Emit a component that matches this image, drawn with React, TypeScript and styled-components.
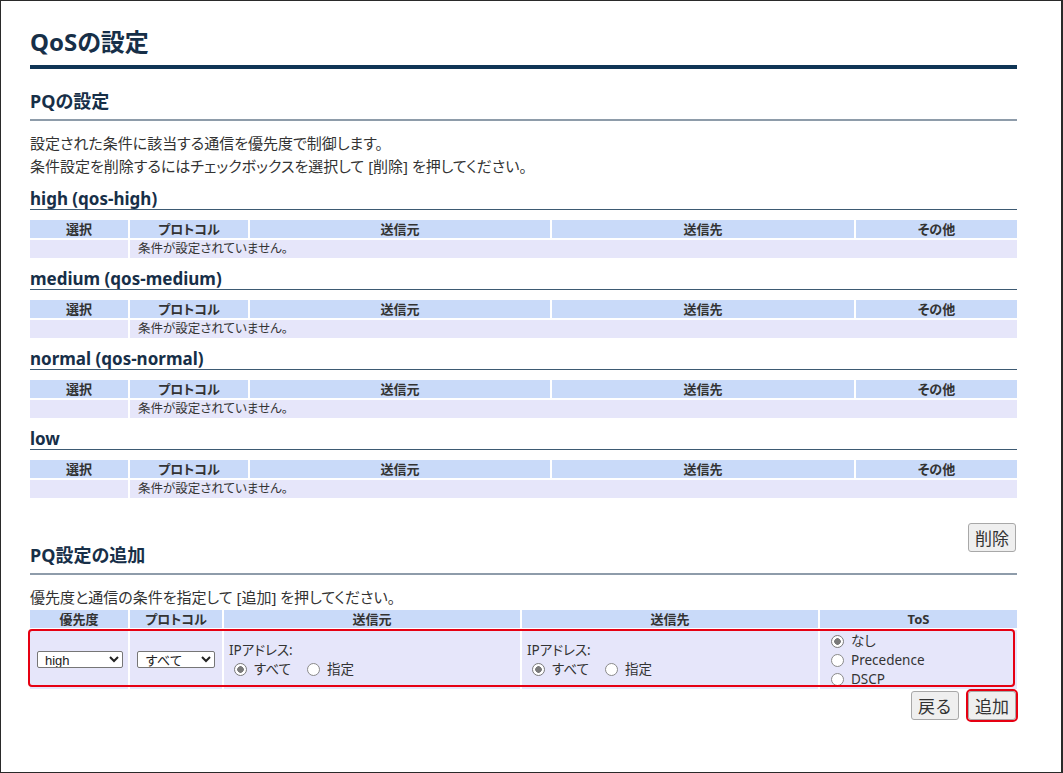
import React from 'react';
import styled, { createGlobalStyle } from 'styled-components';

const GlobalStyle = createGlobalStyle`
  html, body {
    margin: 0;
    padding: 0;
    background: #ffffff;
  }
  body {
    font-family: "Noto Sans", "Noto Sans CJK JP", sans-serif;
    font-feature-settings: "palt" 1;
    color: #333333;
  }
`;

const Frame = styled.div`
  width: 1063px;
  height: 773px;
  box-sizing: border-box;
  border: 1px solid #2a2a2a;
  border-right-width: 2px;
  padding: 27px 44px 0 29px;
  overflow: hidden;
`;

const PageTitle = styled.h1`
  margin: 0;
  font-size: 24px;
  line-height: 28px;
  font-weight: 700;
  color: #172f48;
  padding-bottom: 9px;
  border-bottom: 4px solid #0f3555;
`;

const SectionTitle = styled.h2<{ $offset?: number }>`
  margin: ${(p) => p.$offset ?? 21}px 0 0;
  font-size: 18px;
  line-height: 22px;
  font-weight: 700;
  color: #172f48;
  padding-bottom: 7px;
  border-bottom: 2px solid #8e9caa;
`;

const Lead = styled.p<{ $top?: number }>`
  margin: ${(p) => p.$top ?? 11}px 0 0;
  font-size: 15px;
  line-height: 23px;
  color: #333333;
`;

const QueueTitle = styled.h3`
  margin: 11px 0 0;
  font-size: 17px;
  line-height: 20px;
  font-weight: 700;
  color: #172f48;
  border-bottom: 1px solid #3d5a73;
`;

const Grid = styled.div<{ $cols: string; $top?: number }>`
  display: grid;
  grid-template-columns: ${(p) => p.$cols};
  gap: 2px;
  margin-top: ${(p) => p.$top ?? 10}px;
`;

const HeadCell = styled.div`
  background: #c9daf9;
  font-size: 13px;
  line-height: 18px;
  font-weight: 700;
  text-align: center;
  color: #333333;
`;

const BodyCell = styled.div<{ $span?: number }>`
  background: #e6e6fa;
  font-size: 12.5px;
  line-height: 18px;
  padding-left: 8px;
  color: #333333;
  grid-column: span ${(p) => p.$span ?? 1};
`;

const ListCols = '98px 118px 300px 302px 1fr';
const AddCols = '98px 92px 296px 296px 1fr';

const ActionRow = styled.div<{ $top: number }>`
  display: flex;
  justify-content: flex-end;
  gap: 9px;
  margin-top: ${(p) => p.$top}px;
  padding-right: 1px;
`;

const Button = styled.button<{ $marked?: boolean }>`
  height: 29px;
  padding: 0 6px;
  font-family: "Noto Sans CJK JP", sans-serif;
  font-size: 17px;
  line-height: 27px;
  color: #333333;
  background: #efefef;
  border: 1px solid #a8a8a8;
  border-radius: 3px;
  outline: ${(p) => (p.$marked ? '2px solid #e60012' : 'none')};
  outline-offset: 0;
`;

const FormRow = styled.div`
  grid-column: 1 / -1;
  display: grid;
  grid-template-columns: ${AddCols};
  gap: 2px;
  position: relative;

  &::after {
    content: '';
    position: absolute;
    top: -1px;
    left: -2px;
    right: 2px;
    bottom: 2px;
    border: 2px solid #e60012;
    border-radius: 4px;
    pointer-events: none;
  }
`;

const FormCell = styled.div<{ $pad?: string }>`
  background: #e6e6fa;
  display: flex;
  flex-direction: column;
  justify-content: center;
  padding: ${(p) => p.$pad ?? '0 0 0 7px'};
  font-size: 13.5px;
  color: #333333;
`;

const Select = styled.select<{ $w: number }>`
  width: ${(p) => p.$w}px;
  height: 17px;
  padding: 0 0 0 3px;
  font-family: "Liberation Sans", "Noto Sans CJK JP", sans-serif;
  font-size: 13px;
  color: #222222;
  background: #ffffff;
  border: 1px solid #767676;
  border-radius: 2px;
`;

const Line = styled.div`
  display: flex;
  align-items: center;
  line-height: 19px;
  height: 19px;
  white-space: nowrap;
`;

const Radio = styled.input.attrs({ type: 'radio' })`
  appearance: none;
  width: 13px;
  height: 13px;
  margin: 0 7px 0 5px;
  border: 1px solid #8a8a8a;
  border-radius: 50%;
  background: #ffffff;
  box-sizing: border-box;

  &:checked {
    border-color: #7a7a7a;
    background: radial-gradient(circle, #7a7a7a 0 3px, #ffffff 3.6px);
  }
`;

const RadioText = styled.span`
  margin-right: 11px;
`;

type Queue = { title: string };

const queues: Queue[] = [
  { title: 'high (qos-high)' },
  { title: 'medium (qos-medium)' },
  { title: 'normal (qos-normal)' },
  { title: 'low' },
];

const listHeads = ['選択', 'プロトコル', '送信元', '送信先', 'その他'];
const addHeads = ['優先度', 'プロトコル', '送信元', '送信先', 'ToS'];

const AddressField = ({ name }: { name: string }) => (
  <>
    <Line>IPアドレス:</Line>
    <Line>
      <Radio name={name} defaultChecked />
      <RadioText>すべて</RadioText>
      <Radio name={name} />
      <RadioText>指定</RadioText>
    </Line>
  </>
);

export default function App() {
  return (
    <>
      <GlobalStyle />
      <Frame>
        <PageTitle>QoSの設定</PageTitle>

        <SectionTitle>PQの設定</SectionTitle>
        <Lead>
          設定された条件に該当する通信を優先度で制御します。
          <br />
          条件設定を削除するにはチェックボックスを選択して [削除] を押してください。
        </Lead>

        {queues.map((q) => (
          <div key={q.title}>
            <QueueTitle>{q.title}</QueueTitle>
            <Grid $cols={ListCols}>
              {listHeads.map((h) => (
                <HeadCell key={h}>{h}</HeadCell>
              ))}
              <BodyCell />
              <BodyCell $span={4}>条件が設定されていません。</BodyCell>
            </Grid>
          </div>
        ))}

        <ActionRow $top={25}>
          <Button>削除</Button>
        </ActionRow>

        <SectionTitle $offset={-8}>PQ設定の追加</SectionTitle>
        <Lead $top={11}>優先度と通信の条件を指定して [追加] を押してください。</Lead>

        <Grid $cols={AddCols} $top={1}>
          {addHeads.map((h) => (
            <HeadCell key={h}>{h}</HeadCell>
          ))}
          <FormRow>
            <FormCell>
              <Select $w={86} defaultValue="high">
                <option value="high">high</option>
                <option value="medium">medium</option>
                <option value="normal">normal</option>
                <option value="low">low</option>
              </Select>
            </FormCell>
            <FormCell>
              <Select $w={78} defaultValue="all">
                <option value="all">すべて</option>
                <option value="tcp">tcp</option>
                <option value="udp">udp</option>
              </Select>
            </FormCell>
            <FormCell $pad="0 0 0 5px">
              <AddressField name="src" />
            </FormCell>
            <FormCell $pad="0 0 0 5px">
              <AddressField name="dst" />
            </FormCell>
            <FormCell $pad="2px 0 0 6px">
              <Line>
                <Radio name="tos" defaultChecked />
                <span>なし</span>
              </Line>
              <Line>
                <Radio name="tos" />
                <span>Precedence</span>
              </Line>
              <Line>
                <Radio name="tos" />
                <span>DSCP</span>
              </Line>
            </FormCell>
          </FormRow>
        </Grid>

        <ActionRow $top={2}>
          <Button>戻る</Button>
          <Button $marked>追加</Button>
        </ActionRow>
      </Frame>
    </>
  );
}
